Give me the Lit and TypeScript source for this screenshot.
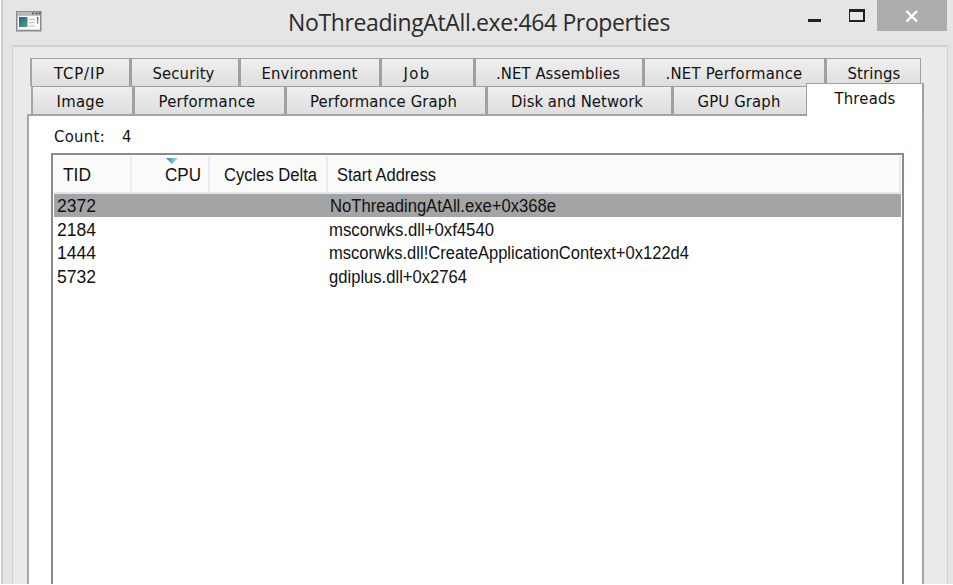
import { LitElement, html, css } from "lit";
import { customElement, property } from "lit/decorators.js";

/* A single-line label fitted to a given width, by tracking or by condensing its glyphs. */
@customElement("fit-label")
class FitLabel extends LitElement {
  @property({ type: Number }) width = 0;
  @property() text = "";
  @property({ type: Boolean }) condense = false;

  static styles = css`
    :host { display: block; white-space: pre; }
    .label { display: inline-block; transform-origin: 0 50%; }
  `;

  updated() {
    const el = this.renderRoot.querySelector(".label") as HTMLElement;
    el.style.letterSpacing = "0px";
    el.style.transform = "none";
    const natural = el.getBoundingClientRect().width;
    if (this.condense) {
      el.style.transform = `scaleX(${(this.width / natural).toFixed(4)})`;
    } else {
      const gap = (this.width - natural) / this.text.length;
      el.style.letterSpacing = gap.toFixed(3) + "px";
    }
  }

  render() {
    return html`<span class="label">${this.text}</span>`;
  }
}

interface Tab { label: string; size: number; inset: number; width: number; }

const BACK_TABS: Tab[] = [
  { label: "TCP/IP", size: 102, inset: 22, width: 51 },
  { label: "Security", size: 109, inset: 20.5, width: 62 },
  { label: "Environment", size: 141, inset: 20.5, width: 96 },
  { label: "Job", size: 94, inset: 21.5, width: 27 },
  { label: ".NET Assemblies", size: 169, inset: 20, width: 124 },
  { label: ".NET Performance", size: 182, inset: 20.5, width: 137 },
  { label: "Strings", size: 94, inset: 20.5, width: 53 },
];

const FRONT_TABS: Tab[] = [
  { label: "Image", size: 104, inset: 23.5, width: 48 },
  { label: "Performance", size: 152, inset: 23.5, width: 97 },
  { label: "Performance Graph", size: 201, inset: 23, width: 147 },
  { label: "Disk and Network", size: 186, inset: 23, width: 132 },
  { label: "GPU Graph", size: 132, inset: 23.5, width: 83 },
];

const THREADS = [
  { tid: "2372", address: "NoThreadingAtAll.exe+0x368e", width: 226 },
  { tid: "2184", address: "mscorwks.dll+0xf4540", width: 165 },
  { tid: "1444", address: "mscorwks.dll!CreateApplicationContext+0x122d4", width: 360 },
  { tid: "5732", address: "gdiplus.dll+0x2764", width: 138 },
];

@customElement("app-root")
class AppRoot extends LitElement {
  static styles = css`
    * { box-sizing: border-box; }
    :host {
      display: block; width: 953px; height: 585px; overflow: hidden;
      background: #fff; padding: 0 1px 1px; color: #111;
      font-family: "DejaVu Sans Condensed", "DejaVu Sans", sans-serif; font-size: 16.5px;
    }
    .window {
      height: 584px; background: #e5e5e5; border-left: 2px solid #ccc;
      display: flex; flex-direction: column; overflow: hidden;
    }
    .titlebar { height: 45px; flex: none; display: flex; align-items: flex-start; }
    .app-icon { margin: 11px 0 0 13px; width: 26px; height: 21px; }
    .title {
      margin: 5px 0 0 246px; width: 382px; line-height: 34px; font-size: 23px;
      font-family: "Open Sans", "Noto Sans", sans-serif; color: #2b2b2b;
    }
    .controls { display: flex; margin-left: 138px; }
    .min { width: 13px; height: 3px; background: #222; margin: 19px 0 0; }
    .max { width: 16px; height: 13px; border: 2px solid #222; border-top-width: 3px; border-left-width: 1px; margin: 9px 0 0 28px; }
    .close { width: 70px; height: 31px; background: #adadad; margin-left: 12px; display: flex; justify-content: center; padding-top: 10px; }
    .client {
      margin-left: 9px; width: 936px; flex: 1; border: 2px solid #d2d2d2; border-left-width: 1px; border-right-width: 1px; border-bottom: 0;
      background: #eaeaea; padding: 11px 0 0 14px; display: flex; flex-direction: column;
    }
    .row { display: flex; flex: none; }
    .back { margin-left: 3px; height: 28px; }
    .front { margin-left: 4px; height: 28px; }
    .tab {
      flex: none; border-top: 1px solid #a0a0a0; border-right: 3px solid #a0a0a0;
      background: linear-gradient(#efefef, #dedede); box-shadow: inset 0 1px #f0f0f0; line-height: 29px;
    }
    .tab:first-child { border-left: 2px solid #a5a5a5; }
    .back .tab:last-child { border-right-width: 1px; }
    .front .tab:nth-child(5) { border-right: 0; }
    .active {
      position: relative; flex: none; width: 118px; height: 33px; margin-top: -3px; background: #fff;
      border: 1px solid #a0a0a0; border-right-width: 2px; border-bottom: 0; line-height: 30px; padding-left: 27.5px;
    }
    .panel {
      width: 897px; flex: 1; background: #fff; border: 2px solid #a6a6a6; border-bottom: 0; border-top-color: #a3a3a3;
      padding: 9px 0 0 23px; display: flex; flex-direction: column;
    }
    .count { display: flex; gap: 17px; padding-left: 2px; height: 28px; line-height: 23px; flex: none; }
    .list {
      width: 853px; flex: 1; margin-left: -1px; border: 2px solid #878b91; border-bottom: 0; padding: 1px 1px 0;
      font-family: "Liberation Sans", Arial, sans-serif; font-size: 18px;
    }
    .head { display: flex; height: 38px; background: #fbfbfb; border-bottom: 2px solid #dce7f2; line-height: 39px; }
    .cell { position: relative; border-right: 2px solid #e3eefa; flex: none; padding-left: 9px; }
    .c1 { width: 78px; }
    .c2 { width: 78px; padding-left: 33px; }
    .c3 { width: 118px; padding-left: 14px; }
    .c4 { flex: 1; padding-left: 9px; }
    .sort { position: absolute; left: 34px; top: 2px; width: 12px; height: 6px; }
    .item { display: flex; height: 23.4px; line-height: 25px; padding-left: 3px; }
    .item .tid { width: 272px; }
    .item.selected { background: #a4a4a4; height: 23px; margin-bottom: 1px; }
    .item.selected .tid { width: 273px; }
  `;

  private tab(t: Tab) {
    return html`<div class="tab" style="width:${t.size}px;padding-left:${t.inset}px">
      <fit-label .text=${t.label} .width=${t.width}></fit-label>
    </div>`;
  }

  private narrow(text: string, width: number) {
    return html`<fit-label condense .text=${text} .width=${width}></fit-label>`;
  }

  render() {
    return html`
      <div class="window">
        <div class="titlebar">
          <svg class="app-icon" viewBox="0 0 26 21">
            <defs>
              <linearGradient id="g" x2="1" y2="1"><stop offset="0" stop-color="#255b9c" /><stop offset="1" stop-color="#55a866" /></linearGradient>
              <linearGradient id="h" x2="0" y2="1"><stop offset="0" stop-color="#245ba2" /><stop offset="1" stop-color="#70c276" /></linearGradient>
            </defs>
            <rect x="0.75" y="0.75" width="24" height="19" fill="#fafafa" stroke="#858a91" stroke-width="1.5" />
            <path d="M1.5 2.5H24" stroke="#b4bbc4" stroke-width="2" />
            <path d="M1.5 4H24" stroke="#8a9097" />
            <path d="M16 2.3h2M19.5 2.3h2M22.5 2.3h2" stroke="#4c5a70" stroke-width="1.8" />
            <rect x="3" y="6" width="8.5" height="10" fill="url(#g)" />
            <path d="M13 8.5h6M13 11.5h6M13 15h6" stroke="#bdbdbd" stroke-width="1.2" />
            <rect x="21" y="6" width="1.3" height="7" fill="url(#h)" />
            <path d="M2 18.4H24" stroke="#dcdcdc" />
          </svg>
          <div class="title"><fit-label .text=${"NoThreadingAtAll.exe:464 Properties"} .width=${382}></fit-label></div>
          <div class="controls">
            <div class="min"></div>
            <div class="max"></div>
            <div class="close">
              <svg width="14" height="13" viewBox="0 0 14 13"><path d="M1.5 1L12 11.5M12 1L1.5 11.5" stroke="#fff" stroke-width="2.4" /></svg>
            </div>
          </div>
        </div>
        <div class="client">
          <div class="row back">${BACK_TABS.map((t) => this.tab(t))}</div>
          <div class="row front">
            ${FRONT_TABS.map((t) => this.tab(t))}
            <div class="active"><fit-label .text=${"Threads"} .width=${61}></fit-label></div>
          </div>
          <div class="panel">
            <div class="count">
              <fit-label .text=${"Count:"} .width=${51}></fit-label>
              <span>4</span>
            </div>
            <div class="list">
              <div class="head">
                <div class="cell c1">${this.narrow("TID", 28)}</div>
                <div class="cell c2">
                  <svg class="sort" viewBox="0 0 12 6">
                    <defs><linearGradient id="s" x2="1"><stop offset="0" stop-color="#3e7f9e" /><stop offset="1" stop-color="#acdcf2" /></linearGradient></defs>
                    <path d="M0 0H12L6 6Z" fill="url(#s)" />
                  </svg>
                  ${this.narrow("CPU", 36)}
                </div>
                <div class="cell c3">${this.narrow("Cycles Delta", 93)}</div>
                <div class="cell c4">${this.narrow("Start Address", 99)}</div>
              </div>
              ${THREADS.map(
                (t, i) => html`<div class="item ${i === 0 ? "selected" : ""}">
                  <div class="tid">${this.narrow(t.tid, 39)}</div>
                  ${this.narrow(t.address, t.width)}
                </div>`
              )}
            </div>
          </div>
        </div>
      </div>
    `;
  }
}
